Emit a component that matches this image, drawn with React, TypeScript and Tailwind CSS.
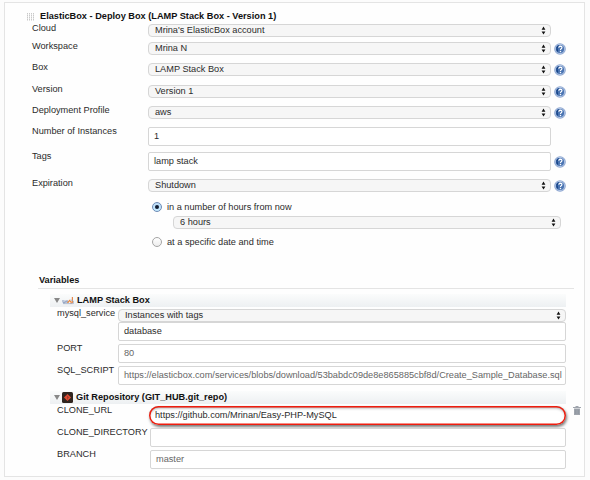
import React from "react";

const FONT = "font-['Liberation_Sans',Arial,sans-serif]";

function Help() {
  return (
    <svg className="ml-[3px] h-3 w-3 shrink-0" viewBox="0 0 12 12">
      <circle cx="6" cy="6" r="5.8" fill="#8ba5d0" />
      <circle cx="6" cy="6" r="4.9" fill="#b3c6e4" />
      <circle cx="6" cy="6" r="4.1" fill="#4a74b2" />
      <path d="M2.4 4.2Q3.5 2 5 2.3L4.4 4.2L3.5 5.6L4.2 7.6L3.6 9Q1.7 7 2.4 4.2" fill="#174487" />
      <path d="M4.8 4.7Q4.9 3.1 6.4 3.1Q8 3.2 7.9 4.6Q7.8 5.4 6.9 5.9Q6.5 6.2 6.5 7" fill="none" stroke="#fff" strokeWidth="1.2" />
      <circle cx="6.5" cy="8.6" r=".75" fill="#fff" />
    </svg>
  );
}

function Select({ value, className = "w-[403px]" }: { value: string; className?: string }) {
  return (
    <div className={`flex h-[13px] shrink-0 items-center justify-between rounded-[4px] border border-[#d6d6d6] bg-[#f6f6f6] pr-[4px] pl-[6px] ${className}`}>
      <span className="pb-[2px] leading-[10px]">{value}</span>
      <svg className="h-[9px] w-[5px]" viewBox="0 0 5 9">
        <path d="M2.5 .6L4.4 3.8H.6ZM2.5 8.6L4.4 5.4H.6Z" fill="#111" />
      </svg>
    </div>
  );
}

function Input({ value, className = "w-[403px]", muted = false }: { value: string; className?: string; muted?: boolean }) {
  return (
    <div className={`flex h-[19px] shrink-0 items-center rounded-[2px] border border-[#d6d6d6] bg-white pl-[5px] whitespace-nowrap ${muted ? "text-[#666]" : ""} ${className}`}>
      <span className="pb-[1px] leading-[10px]">{value}</span>
    </div>
  );
}

function Row({ label, labelWidth = "w-[116px]", className, help = false, children }: {
  label: string;
  labelWidth?: string;
  className: string;
  help?: boolean;
  children: React.ReactNode;
}) {
  return (
    <div className={`flex items-center ${className}`}>
      <span className={`shrink-0 self-start leading-[9px] whitespace-nowrap ${labelWidth}`}>{label}</span>
      {children}
      {help && <Help />}
    </div>
  );
}

function Triangle() {
  return (
    <svg className="mr-[2px] h-[5px] w-[6px]" viewBox="0 0 6 5">
      <path d="M0 0H6L3 5Z" fill="#888" />
    </svg>
  );
}

function LampIcon() {
  return (
    <svg className="mr-[3px] h-[11px] w-[12px]" viewBox="0 0 12 11">
      <path d="M1 5V7.5Q2 8.6 3 7.5V5.4M4 8V6H6V8" fill="none" stroke="#8295b9" strokeWidth="1" />
      <path d="M5.5 8L7.5 5.5L9.5 7.5" fill="none" stroke="#ef8b3d" strokeWidth="1.2" />
      <path d="M10.4 2V7.5L8.5 8.5" fill="none" stroke="#e8894d" strokeWidth="1.2" />
      <path d="M8.5 4.8L11.4 6V8.6H1" fill="none" stroke="#9aaac4" strokeWidth=".7" />
    </svg>
  );
}

function GitIcon() {
  return (
    <svg className="mr-[3px] h-[11px] w-[11px]" viewBox="0 0 11 11">
      <rect width="11" height="11" rx="1.5" fill="#30251f" />
      <path d="M5.5 1.9L9.1 5.5L5.5 9.1L1.9 5.5Z" fill="#df4b32" />
      <path d="M4.6 3.6L5.5 4.5V7.4M5.5 4.6L6.9 5.8" fill="none" stroke="#8f382b" strokeWidth=".7" />
    </svg>
  );
}

function Radio({ on = false, label, className }: { on?: boolean; label: string; className: string }) {
  return (
    <div className={`ml-[120px] flex h-[10px] items-center ${className}`}>
      <span className={`flex h-[10px] w-[10px] items-center justify-center rounded-full border ${on ? "border-[#6e8bb5] bg-linear-to-b from-[#bddcf7] to-[#c5ebff]" : "border-[#a5a5a5] bg-linear-to-b from-white to-[#ededed]"}`}>
        {on && <span className="h-[4px] w-[4px] rounded-full bg-[#101c30]" />}
      </span>
      <span className="ml-[5px] pb-px leading-[10px]">{label}</span>
    </div>
  );
}

export default function App() {
  return (
    <div className={`h-[480px] w-[590px] overflow-hidden bg-[#fcfcfc] pt-[2px] pl-[4px] text-[9.2px] text-[#2b2b2b] ${FONT}`}>
      <main className="h-[475px] w-[581px] border border-[#e4e4e4] bg-[#fefefe] pt-[8px] pl-[27px]">
        <h1 className="-ml-[5px] flex h-[11px] items-center font-bold text-[#111]">
          <svg className="mr-[5px] h-[8px] w-[8px]" viewBox="0 0 8 8">
            <path d="M.5 0V8M2.5 0V8M4.5 0V8M6.5 0V8" stroke="#c9c9c9" strokeDasharray="1.5 .5" />
          </svg>
          <span className="whitespace-nowrap">ElasticBox - Deploy Box (LAMP Stack Box - Version 1)</span>
        </h1>

        <Row label="Cloud" className="mt-[2px] h-[13px]"><Select value="Mrina's ElasticBox account" /></Row>
        <Row label="Workspace" className="mt-[5px] h-[13px]" help><Select value="Mrina N" /></Row>
        <Row label="Box" className="mt-[8px] h-[13px]" help><Select value="LAMP Stack Box" /></Row>
        <Row label="Version" className="mt-[9px] h-[13px]" help><Select value="Version 1" /></Row>
        <Row label="Deployment Profile" className="mt-[8px] h-[13px]" help><Select value="aws" /></Row>
        <Row label="Number of Instances" className="mt-[8px] h-[19px]"><Input value="1" /></Row>
        <Row label="Tags" className="mt-[6px] h-[19px]" help><Input value="lamp stack" /></Row>
        <Row label="Expiration" className="mt-[8px] h-[13px]" help><Select value="Shutdown" /></Row>
        <Radio on label="in a number of hours from now" className="mt-[10px]" />
        <Select value="6 hours" className="mt-[4px] ml-[141px] w-[388px]" />
        <Radio label="at a specific date and time" className="mt-[8px]" />

        <section className="mt-[28px] ml-[6px] w-[536px]">
          <h2 className="h-[14px] w-[536px] border-b border-[#e4e4e4] pl-px text-[9.2px] leading-[11px] font-bold text-[#111]">Variables</h2>
          <div className="ml-[12px] w-[516px]">
            <h3 className="mt-[5px] flex h-[13px] items-center bg-linear-to-b from-[#fbfcfc] to-[#edf0f2] pl-[4px] font-bold text-[#111]">
              <Triangle /><LampIcon />LAMP Stack Box
            </h3>
            <div className="pl-[7px]">
              <Row label="mysql_service" labelWidth="w-[61px]" className="mt-[2px] h-[13px]"><Select value="Instances with tags" className="w-[448px]" /></Row>
              <Row label="" labelWidth="w-[61px]" className="h-[19px]"><Input value="database" className="w-[448px]" /></Row>
              <Row label="PORT" labelWidth="w-[61px]" className="mt-[3px] h-[19px]"><Input value="80" className="w-[448px]" muted /></Row>
              <Row label="SQL_SCRIPT" labelWidth="w-[61px]" className="mt-[3px] h-[19px]">
                <Input value="https://elasticbox.com/services/blobs/download/53babdc09de8e865885cbf8d/Create_Sample_Database.sql" className="w-[448px]" muted />
              </Row>
            </div>
            <h3 className="mt-[6px] flex h-[13px] items-center bg-linear-to-b from-[#fbfcfc] to-[#edf0f2] pl-[4px] font-bold text-[#111]">
              <Triangle /><GitIcon />Git Repository (GIT_HUB.git_repo)
            </h3>
            <div className="pl-[7px]">
              <Row label="CLONE_URL" labelWidth="w-[92px]" className="mt-[2px] h-[19px]">
                <div className="flex h-[19px] w-[417px] shrink-0 items-center rounded-full bg-white pl-[6px] shadow-[1px_2px_3px_#777,inset_0_0_0_1.5px_#ef1d0e,inset_0_2px_3px_#999]">
                  <span className="pb-px leading-[10px]">https://github.com/Mrinan/Easy-PHP-MySQL</span>
                </div>
                <svg className="ml-[7px] h-[9px] w-[8px] shrink-0 self-start" viewBox="0 0 8 9">
                  <path d="M0 1H2.5V0H5.5V1H8V2H0ZM1 2.5H7V9H1Z" fill="#a0a5ad" />
                  <path d="M2.5 3.5V8M4 3.5V8M5.5 3.5V8" stroke="#858d99" strokeWidth=".5" />
                </svg>
              </Row>
              <Row label="CLONE_DIRECTORY" labelWidth="w-[93px]" className="mt-[3px] h-[19px]"><Input value="" className="w-[416px]" /></Row>
              <Row label="BRANCH" labelWidth="w-[93px]" className="mt-[3px] h-[19px]"><Input value="master" className="w-[416px]" muted /></Row>
            </div>
          </div>
        </section>
      </main>
    </div>
  );
}
